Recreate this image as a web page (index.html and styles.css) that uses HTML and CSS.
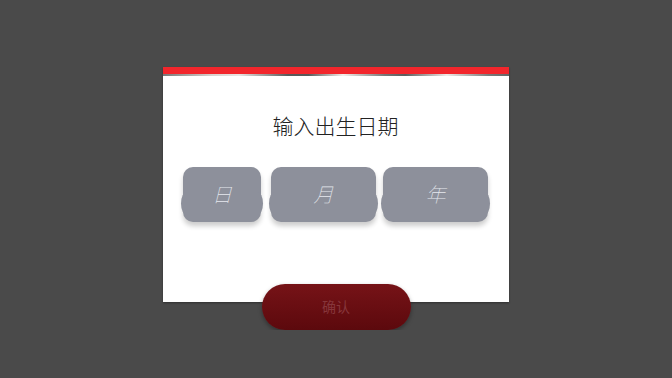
FILE: index.html
```html
<!DOCTYPE html>
<html lang="zh">
<head>
<meta charset="utf-8">
<link rel="stylesheet" href="styles.css">
</head>
<body>
<main class="stage">
  <section class="card">
    <div class="card-bar"></div>
    <div class="card-sheen"></div>
    <div class="card-body">
      <h1 class="title">输入出生日期</h1>
      <div class="fields">
        <div class="field field-day"><span>日</span></div>
        <div class="field field-wide"><span>月</span></div>
        <div class="field field-wide"><span>年</span></div>
      </div>
    </div>
  </section>
  <button class="confirm">确认</button>
</main>
</body>
</html>
```
FILE: styles.css
```css
html, body {
  margin: 0;
  padding: 0;
  background: #4a4a4a;
  font-family: "Noto Sans CJK SC", "Noto Sans", sans-serif;
}
.stage {
  display: flex;
  flex-direction: column;
  align-items: center;
  padding-top: 67px;
}
.card {
  width: 346px;
  height: 235px;
  background: #fff;
  display: flex;
  flex-direction: column;
  box-shadow: 0 1px 2px rgba(0,0,0,0.35);
}
.card-bar {
  height: 7px;
  background: #f2262c;
}
.card-sheen {
  height: 2px;
  background: linear-gradient(90deg, #777 0%, #d8d0cc 14%, #e8e4e2 22%, #5a5a5a 36%, #585858 42%, #f4eeea 52%, #777 64%, #5c5c5c 70%, #efe9e6 82%, #7a7a7a 94%, #666 100%);
}
.card-body {
  flex: 1;
  padding: 35px 21px 0 20px;
}
.title {
  margin: 0;
  text-align: center;
  font-size: 21px;
  line-height: 28px;
  font-weight: 200;
  color: #222;
}
.fields {
  display: flex;
  margin-top: 28px;
}
.field {
  position: relative;
  height: 55px;
  background: #8d909b;
  border-radius: 10px;
  display: flex;
  align-items: center;
  justify-content: center;
  box-shadow: 0 4px 5px rgba(0,0,0,0.2);
}
.field::after {
  content: "";
  position: absolute;
  left: -2px;
  right: -2px;
  top: 25px;
  bottom: 7px;
  background: #8d909b;
  border-radius: 6px / 12px;
}
.field span {
  position: relative;
  z-index: 1;
  font-size: 20px;
  font-style: italic;
  font-weight: 100;
  color: #e6e8ee;
  margin-top: -2px;
}
.field-day { width: 78px; margin-right: 10px; }
.field-wide { width: 105px; }
.field-wide + .field-wide { margin-left: 7px; }
.confirm {
  margin-top: -18px;
  width: 149px;
  height: 46px;
  border: none;
  border-radius: 23px;
  background: linear-gradient(180deg, #761317 0%, #5c090d 100%);
  box-shadow: 0 2px 4px rgba(0,0,0,0.35);
  color: #86363b;
  font-family: "Noto Sans CJK SC", sans-serif;
  font-size: 14px;
  padding: 0 0 3px;
}
```
